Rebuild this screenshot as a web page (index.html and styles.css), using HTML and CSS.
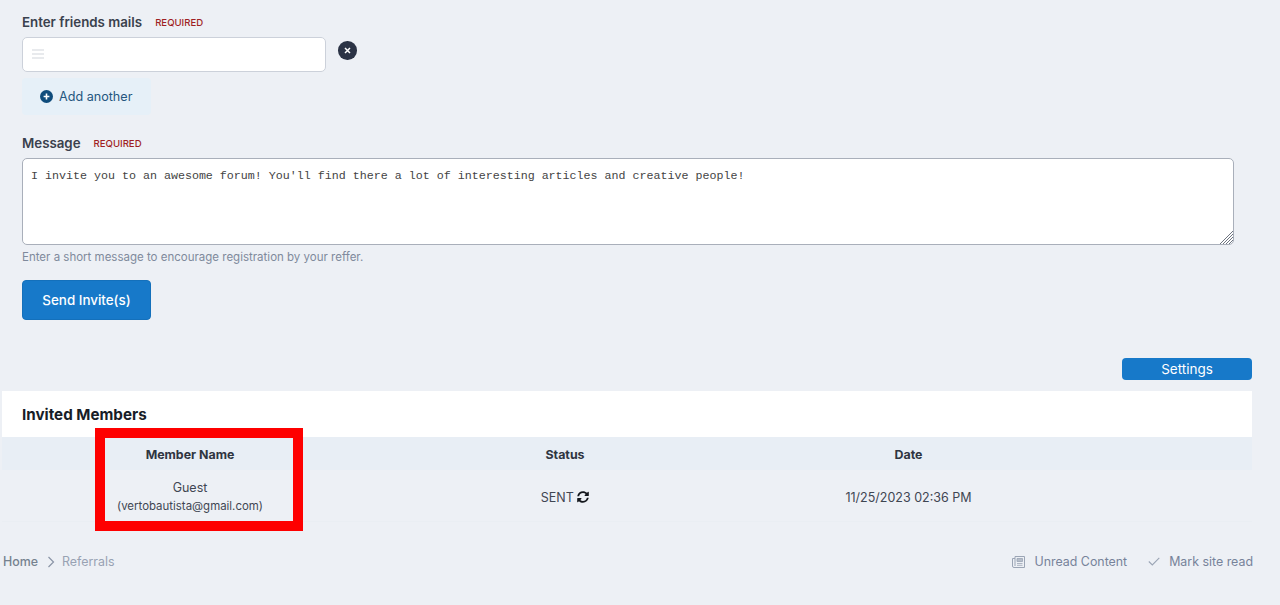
FILE: index.html
```html
<!DOCTYPE html>
<html lang="en">
    <head>
        <meta charset="UTF-8" />
        <title>Referrals</title>
        <link rel="stylesheet" href="styles.css">
    </head>
    <body>
        <form class="invite">
            <div class="label-row">
                <label class="label">Enter friends mails</label>
                <span class="required">Required</span>
            </div>
            <div class="mail-row">
                <div class="mail-input">
                    <svg class="drag" width="12" height="10" viewBox="0 0 12 10"><path d="M0 1h12M0 5h12M0 9h12" stroke="#e1e3e8" stroke-width="1.4"/></svg>
                </div>
                <button type="button" class="remove">
                    <svg width="7" height="7" viewBox="0 0 7 7"><path d="M1 1l5 5M6 1L1 6" stroke="#fff" stroke-width="1.5"/></svg>
                </button>
            </div>
            <button type="button" class="add">
                <svg width="13" height="13" viewBox="0 0 13 13"><circle cx="6.5" cy="6.5" r="6.5" fill="#0f4c7c"/><path d="M6.5 3.6v5.8M3.6 6.5h5.8" stroke="#fff" stroke-width="1.6"/></svg>
                Add another
            </button>

            <div class="label-row message-label">
                <label class="label">Message</label>
                <span class="required">Required</span>
            </div>
            <div class="message-box">
                <textarea class="message">I invite you to an awesome forum! You'll find there a lot of interesting articles and creative people!</textarea>
                <svg class="grip" width="14" height="14" viewBox="0 0 14 14"><path d="M1 14L14 1M4 14L14 4M7 14l7-7M10 14l4-4" stroke="#6d7480" stroke-width="1"/></svg>
            </div>
            <p class="hint">Enter a short message to encourage registration by your reffer.</p>
            <button type="button" class="send">Send Invite(s)</button>
        </form>

        <div class="settings-row">
            <button type="button" class="settings">Settings</button>
        </div>

        <section class="members">
            <h2 class="members-title">Invited Members</h2>
            <div class="members-row members-head">
                <div>Member Name</div>
                <div>Status</div>
                <div>Date</div>
                <div></div>
            </div>
            <div class="members-row members-body">
                <div>Guest<br /><small>(vertobautista@gmail.com)</small></div>
                <div class="status">SENT
                    <svg width="12" height="12" viewBox="0 0 512 512"><path d="M370.7 133.3C339.5 104 298.9 88 255.800 88c-77.500.1-144.300 53.200-162.800 126.900-1.300 5.400-6.100 9.100-11.600 9.100H24.100c-7.500 0-13.200-6.800-11.800-14.200C33.900 94.900 134.800 8 256 8c66.400 0 126.800 26.100 171.300 68.700L463 41c15.100-15.100 41-4.400 41 17v134c0 13.300-10.700 24-24 24H346c-21.400 0-32.100-25.900-17-41l41.700-41.700zM32 296h134c21.400 0 32.100 25.900 17 41l-41.700 41.700c31.200 29.300 71.800 45.300 114.900 45.300 77.400-.1 144.300-53.100 162.800-126.900 1.300-5.400 6.100-9.100 11.600-9.100h57.300c7.500 0 13.200 6.800 11.800 14.200C478.100 417.100 377.200 504 256 504c-66.400 0-126.800-26.100-171.300-68.700L49 471c-15.100 15.100-41 4.400-41-17V320c0-13.300 10.700-24 24-24z" fill="#14171c"/></svg>
                </div>
                <div class="date">11/25/2023 02:36 PM</div>
                <div></div>
            </div>
            <div class="highlight"></div>
        </section>

        <footer class="crumbs">
            <nav class="crumbs-left">
                <span class="home">Home</span>
                <svg width="8" height="12" viewBox="0 0 8 12"><path d="M1.500 1l5 5-5 5" fill="none" stroke="#8a94a6" stroke-width="1.200"/></svg>
                <span class="current">Referrals</span>
            </nav>
            <nav class="crumbs-right">
                <span class="crumb-link">
                    <svg width="13" height="12" viewBox="0 0 13 12"><path d="M3 .5h9.500v11H2a1.500 1.500 0 0 1-1.500-1.500V2.500H3M3 .5v9.500" fill="none" stroke="#9ba5b5"/><path d="M5 2.500h5.500v3H5zM5 7.500h5.500M5 9.300h5.500" fill="#b5bdc9" stroke="#9ba5b5" stroke-width=".8"/></svg>
                    Unread Content
                </span>
                <span class="crumb-link">
                    <svg width="12" height="9" viewBox="0 0 12 9"><path d="M.8 4.500l3.500 3.500L11.300.8" fill="none" stroke="#9ba5b5" stroke-width="1.100"/></svg>
                    Mark site read
                </span>
            </nav>
        </footer>
    </body>
</html>
```

FILE: styles.css
```css
* {
    box-sizing: border-box;
}
html,
body {
    height: 605px;
    overflow: hidden;
}
body {
    margin: 0;
    background: #edf0f5;
    font-family: Inter, "Liberation Sans", sans-serif;
    font-size: 13px;
    color: #353c49;
}
button {
    font-family: inherit;
    border: 0;
    padding: 0;
}

/* form */
.invite {
    padding: 14px 0 0 22px;
}
.label-row {
    display: flex;
    align-items: center;
    gap: 13px;
    height: 16px;
}
.label {
    font-size: 13.3px;
    font-weight: 600;
    color: #3a414d;
}
.required {
    font-size: 9.6px;
    font-weight: 500;
    text-transform: uppercase;
    color: #9f1f24;
}
.mail-row {
    display: flex;
    align-items: flex-start;
    gap: 12.5px;
    margin-top: 7px;
}
.mail-input {
    width: 303.5px;
    height: 35px;
    background: #fff;
    border: 1px solid #ccd1da;
    border-radius: 5px;
    padding: 11px 0 0 9px;
}
.drag {
    display: block;
}
.remove {
    width: 18.5px;
    height: 18.5px;
    margin-top: 4px;
    border-radius: 50%;
    background: #2b3345;
    display: flex;
    align-items: center;
    justify-content: center;
}
.add {
    display: flex;
    align-items: center;
    gap: 6px;
    width: 129px;
    height: 37px;
    margin-top: 6px;
    padding: 0 0 1px 18px;
    background: #e6f0f8;
    color: #25577f;
    font-size: 12.6px;
    border-radius: 4px;
}
.message-label {
    margin-top: 20px;
}
.message-box {
    position: relative;
    width: 1212px;
    margin-top: 7px;
}
.message {
    display: block;
    width: 100%;
    height: 87px;
    padding: 10px 8px;
    resize: none;
    background: #fff;
    border: 1px solid #a9afba;
    border-radius: 5px;
    font-family: "Liberation Mono", monospace;
    font-size: 11.67px;
    line-height: 14px;
    color: #444;
}
.grip {
    position: absolute;
    right: 1px;
    bottom: 1px;
}
.hint {
    margin: 5px 0 0;
    font-size: 11.5px;
    line-height: 14px;
    color: #7f8a9c;
}
.send {
    display: block;
    width: 129px;
    height: 40px;
    margin-top: 16px;
    background: #1779c9;
    color: #fff;
    font-size: 13.4px;
    font-weight: 500;
    border: 1px solid #1470bb;
    border-radius: 4px;
}

/* settings */
.settings-row {
    display: flex;
    justify-content: flex-end;
    padding-right: 28px;
    margin-top: 38px;
}
.settings {
    width: 130px;
    height: 22px;
    padding-bottom: 1px;
    background: #1779c9;
    color: #fff;
    font-size: 13.5px;
    border-radius: 4px;
}

/* table */
.members {
    position: relative;
    width: 1250px;
    margin: 11px 0 0 2px;
}
.members-title {
    margin: 0;
    height: 46px;
    padding-left: 20px;
    background: #fff;
    font-size: 15.2px;
    font-weight: 700;
    line-height: 47px;
    color: #181d27;
}
.members-row {
    display: grid;
    grid-template-columns: 376px 374px 313px 187px;
    align-items: center;
    text-align: center;
}
.members-head {
    height: 33px;
    padding-top: 1px;
    background: #e8eef5;
    font-size: 12.4px;
    font-weight: 700;
    color: #2f3541;
}
.members-body {
    height: 52px;
    padding-top: 2px;
    border-bottom: 1px solid #eaeef3;
    font-size: 12.5px;
    line-height: 18px;
    color: #3f4652;
}
.members-body small {
    font-size: 11.45px;
}
.status,
.date {
    padding-top: 2px;
}
.status svg {
    vertical-align: -1px;
}
.highlight {
    position: absolute;
    left: 93px;
    top: 37px;
    width: 208px;
    height: 103px;
    border: 10px solid #fe0000;
}

/* breadcrumb footer */
.crumbs {
    display: flex;
    justify-content: space-between;
    margin-top: 31px;
    padding: 0 27px 0 3px;
    font-size: 12.4px;
    line-height: 17px;
}
.crumbs-left {
    display: flex;
    align-items: center;
    gap: 7px;
}
.home {
    font-weight: 500;
    color: #76828f;
    margin-right: 2px;
}
.current {
    color: #98a2b3;
}
.crumbs-right {
    display: flex;
    gap: 21px;
}
.crumb-link {
    display: flex;
    align-items: center;
    gap: 9px;
    color: #77839a;
}
```
